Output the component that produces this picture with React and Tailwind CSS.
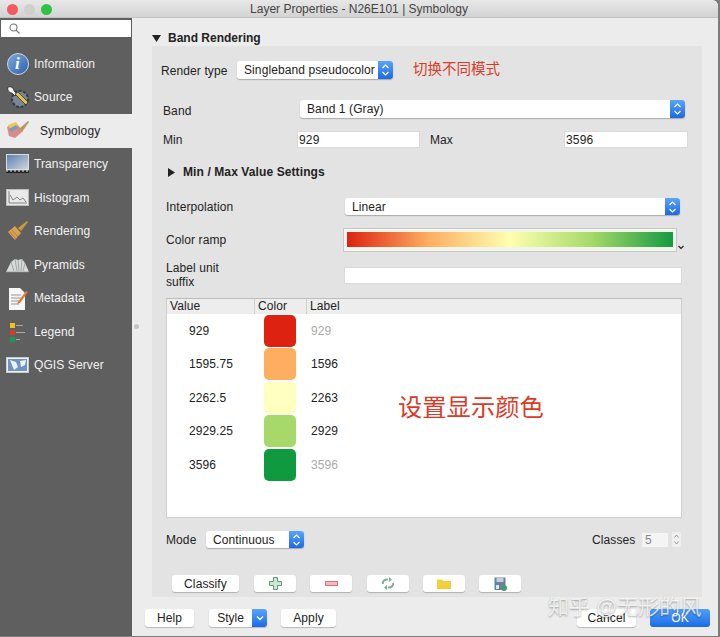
import React from 'react';

const font = { fontFamily: '"Liberation Sans", "Noto Sans CJK SC", sans-serif' };

const Stepper = () => (
  <span className="w-[15px] h-full shrink-0 rounded-r-[3px] bg-gradient-to-b from-[#5aa5f8] to-[#1b69e4] flex items-center justify-center">
    <svg width="9" height="14" viewBox="0 0 9 14" fill="none" stroke="#fff" strokeWidth="1.2">
      <path d="M1.5 5 4.500 2l3 3M1.500 9l3 3 3-3" />
    </svg>
  </span>
);

const Select = ({ children, className, h = 'h-[18px]' }) => (
  <div className={`flex ${h} items-stretch rounded-[3px] bg-white shadow-[0_1px_1px_rgba(0,0,0,0.25)] ${className}`}>
    <span className="flex-1 pl-[7px] text-[12px] leading-[18px] tracking-[0.1px] text-[#222] whitespace-nowrap">{children}</span>
    <Stepper />
  </div>
);

const Input = ({ children, className }) => (
  <div className={`h-[17px] bg-white border border-[#dadada] pl-[1px] text-[12px] leading-[17px] tracking-[0.2px] text-[#222] ${className}`}>{children}</div>
);

const Btn = ({ children, className }) => (
  <div className={`flex h-[17px] items-center justify-center rounded-[3px] bg-white shadow-[0_1px_1px_rgba(0,0,0,0.22)] text-[12px] tracking-[0.1px] text-[#222] ${className}`}>{children}</div>
);

const InfoIcon = () => (
  <span className="flex h-[22px] w-[22px] items-center justify-center rounded-full border border-[#c5d8ef] bg-gradient-to-br from-[#7fa8da] to-[#2f62ad] text-[17px] italic font-bold text-white" style={{ fontFamily: '"Liberation Serif", serif' }}>i</span>
);

const SourceIcon = () => (
  <svg width="24" height="24" viewBox="0 0 24 24">
    <circle cx="14" cy="14" r="8" fill="#7b8794" stroke="#2d3a48" strokeWidth="2" strokeDasharray="3 1.5" />
    <path d="M2 2c3-1 6 1 6 4l3 3-2 2-3-3C3 8 1 5 2 2Z" fill="#f4f4f4" stroke="#222" strokeWidth="0.8" />
    <path d="m9 9 11 11 2-3L12 7Z" fill="#e8c343" stroke="#333" strokeWidth="0.8" />
  </svg>
);

const SymbologyIcon = () => (
  <svg width="24" height="22" viewBox="0 0 24 22">
    <path d="M1 7 10 3l7 8-8 7-6-2Z" fill="#d98a8a" />
    <path d="M2 5 10 2l2 3-8 4Z" fill="#e8cc4a" />
    <path d="M3 9l7-4 2 3-7 4Z" fill="#7f98c0" />
    <path d="m13 9 9-8 1 1-7 10Z" fill="#b49a5c" />
  </svg>
);

const TransparencyIcon = () => (
  <svg width="23" height="20" viewBox="0 0 23 20">
    <defs>
      <linearGradient id="tr" x1="0" x2="1" y1="0" y2="1">
        <stop offset="0" stopColor="#5d7fb0" />
        <stop offset="1" stopColor="#cfd6de" />
      </linearGradient>
    </defs>
    <rect x="0.5" y="0.5" width="22" height="15" fill="url(#tr)" stroke="#ddd" />
    <path d="M0 17h23v2H0Z" fill="#222" />
    <path d="M0 17h23" stroke="#eee" strokeDasharray="2 2" />
  </svg>
);

const HistogramIcon = () => (
  <svg width="23" height="17" viewBox="0 0 23 17">
    <rect x="0.5" y="0.5" width="22" height="16" fill="#e9e9e9" stroke="#bbb" />
    <path d="M3 2v12h18M4 6l3 5 4-3 3 3 3-2 3 4" fill="none" stroke="#777" strokeWidth="0.9" />
  </svg>
);

const RenderingIcon = () => (
  <svg width="22" height="22" viewBox="0 0 22 22">
    <path d="m1 12 7-6 6 7-6 7Z" fill="#d9a04e" />
    <path d="m3 12 6 7M5 10l6 7" stroke="#a8732c" strokeWidth="0.7" />
    <path d="m11 8 9-7 1 1-7 9Z" fill="#c79a3c" />
  </svg>
);

const PyramidsIcon = () => (
  <svg width="23" height="16" viewBox="0 0 23 16">
    <path d="M0 15 5 5l4-3 3 1 4-1 3 4 4 9Z" fill="#d7dad8" />
    <path d="M5 5l3 9M9 2l2 12M12 3l1 11M16 2l-1 12M19 6l-2 8M0 15h23" stroke="#8d908e" strokeWidth="0.7" fill="none" />
  </svg>
);

const MetadataIcon = () => (
  <svg width="20" height="23" viewBox="0 0 20 23">
    <path d="M1 1h11l5 5v17H1Z" fill="#f7f7f7" />
    <path d="M3 8h10M3 11h10M3 14h10M3 17h8" stroke="#888" strokeWidth="0.9" />
    <path d="m10 15 8-11 2 1-8 11-3 1Z" fill="#e6782e" />
  </svg>
);

const LegendIcon = () => (
  <svg width="16" height="20" viewBox="0 0 16 20">
    <rect x="0" y="1" width="5" height="5" fill="#f2c21c" />
    <rect x="0" y="8" width="5" height="5" fill="#e03a22" />
    <rect x="0" y="15" width="5" height="5" fill="#159a5a" />
    <path d="M6 3.500h7M6 10.500h9M6 17.500h4" stroke="#aaa" strokeWidth="1.2" />
  </svg>
);

const ServerIcon = () => (
  <svg width="23" height="16" viewBox="0 0 23 16">
    <rect x="0.5" y="0.5" width="22" height="15" fill="#eef1f4" stroke="#c8ccd0" />
    <rect x="2" y="2" width="19" height="12" fill="#6f94c2" />
    <path d="m4 3 6 2 2 5-4 3-2-5ZM14 4l6-1-1 5-4 2Z" fill="#eef1f4" />
  </svg>
);

const navItems = [
  { label: 'Information', icon: <InfoIcon /> },
  { label: 'Source', icon: <SourceIcon /> },
  { label: 'Symbology', icon: <SymbologyIcon />, active: true },
  { label: 'Transparency', icon: <TransparencyIcon /> },
  { label: 'Histogram', icon: <HistogramIcon /> },
  { label: 'Rendering', icon: <RenderingIcon /> },
  { label: 'Pyramids', icon: <PyramidsIcon /> },
  { label: 'Metadata', icon: <MetadataIcon /> },
  { label: 'Legend', icon: <LegendIcon /> },
  { label: 'QGIS Server', icon: <ServerIcon /> },
];

const classes = [
  { value: '929', color: 'bg-[#dd2211]', label: '929', muted: true },
  { value: '1595.75', color: 'bg-[#fdae61]', label: '1596' },
  { value: '2262.5', color: 'bg-[#ffffc0]', label: '2263' },
  { value: '2929.25', color: 'bg-[#a6d96a]', label: '2929' },
  { value: '3596', color: 'bg-[#0f9a40]', label: '3596', muted: true },
];

const Triangle = ({ open }) => (
  <svg width="9" height="9" viewBox="0 0 9 9" fill="#222">
    {open ? <path d="M0 1h9L4.500 8Z" /> : <path d="M1 0v9l7-4.500Z" />}
  </svg>
);

export default function App() {
  return (
    <div className="h-[637px] w-[720px] overflow-hidden bg-[#7c7c7c]" style={font}>
      <div className="h-[636px] w-[718px] overflow-hidden rounded-tr-[6px] bg-[#ececec] flex flex-col">
        {/* title bar */}
        <div className="relative flex h-[18px] shrink-0 items-center justify-center border-b border-[#c2c2c2] bg-gradient-to-b from-[#e8e8e8] to-[#d3d3d3] pt-[1px] text-[12px] text-[#444]">
          <div className="absolute left-[7px] flex gap-[6px]">
            <span className="h-[11px] w-[11px] rounded-full bg-[#f25b5e]" />
            <span className="h-[11px] w-[11px] rounded-full bg-[#cfcfcf]" />
            <span className="h-[11px] w-[11px] rounded-full bg-[#2cc446]" />
          </div>
          Layer Properties - N26E101 | Symbology
        </div>

        <div className="flex flex-1 min-h-0">
          {/* sidebar */}
          <div className="w-[132px] shrink-0 bg-[#5f5f5f] flex flex-col">
            <div className="mx-[1px] mt-[2px] flex h-[17px] items-center bg-white pl-[8px]">
              <svg width="11" height="11" viewBox="0 0 11 11" fill="none" stroke="#777" strokeWidth="1.1">
                <circle cx="4.500" cy="4.500" r="3.500" />
                <path d="m7 7 3.500 3.500" />
              </svg>
            </div>
            <div className="mt-[10px]">
              {navItems.map((item) => (
                <div
                  key={item.label}
                  className={`flex h-[33.5px] items-center text-[12px] tracking-[0.1px] ${item.active ? 'bg-[#ececec] text-[#222]' : 'text-[#f2f2f2]'}`}
                >
                  <span className="flex w-[34px] shrink-0 items-center justify-center pl-[1px]">{item.icon}</span>
                  <span className={item.active ? 'pl-[6px]' : ''}>{item.label}</span>
                </div>
              ))}
            </div>
          </div>

          {/* splitter */}
          <div className="w-[20px] shrink-0 flex items-start">
            <span className="ml-[2px] mt-[306px] h-[5px] w-[5px] rounded-full bg-[#c4c4c4]" />
          </div>

          {/* main */}
          <div className="w-[550px] shrink-0 flex flex-col">
            <div className="flex h-[28px] items-center gap-[7px] pt-[12px] text-[12px] font-bold text-[#222]">
              <Triangle open />
              Band Rendering
            </div>
            <div className="h-[551px] bg-[#e3e3e3] flex flex-col text-[12px] tracking-[0.1px] text-[#222]">
              <div className="mt-[15px] flex h-[18px] items-center pl-[9px]">
                <span className="w-[76px] pt-[2px]">Render type</span>
                <Select className="w-[156px]">Singleband pseudocolor</Select>
                <span className="ml-[20px] text-[14.500px] tracking-normal text-[#dd3a26]">切换不同模式</span>
              </div>
              <div className="mt-[21px] flex h-[18px] items-center pl-[11px]">
                <span className="w-[137px] pt-[3px]">Band</span>
                <Select className="w-[385px]">Band 1 (Gray)</Select>
              </div>
              <div className="mt-[13px] flex h-[17px] items-center pl-[11px]">
                <span className="w-[134px]">Min</span>
                <Input className="w-[123px]">929</Input>
                <span className="ml-[10px] w-[134px]">Max</span>
                <Input className="w-[124px]">3596</Input>
              </div>
              <div className="mt-[16px] flex h-[16px] items-center gap-[7px] pl-[15px] font-bold">
                <Triangle />
                Min / Max Value Settings
              </div>
              <div className="mt-[18px] flex h-[17px] items-center pl-[14px]">
                <span className="w-[179px]">Interpolation</span>
                <Select className="w-[335px]" h="h-[17px]">Linear</Select>
              </div>
              <div className="mt-[13px] flex h-[24px] pl-[14px]">
                <span className="w-[177px] pt-[3px]">Color ramp</span>
                <div className="h-[24px] w-[334px] border border-[#c8c8c8] bg-[#f1f5ec] p-[3px]">
                  <div className="h-[15px] bg-[linear-gradient(to_right,#dd2211,#fdae61_25%,#ffffb0_50%,#a6d96a_75%,#159a42)]" />
                </div>
                <svg className="mt-[17px] ml-[1px]" width="6" height="5" viewBox="0 0 6 5" fill="none" stroke="#222" strokeWidth="1.2">
                  <path d="m.5 1 2.500 2.500L5.500 1" />
                </svg>
              </div>
              <div className="mt-[10px] flex h-[26px] items-center pl-[14px]">
                <span className="w-[178px] leading-[14px]">Label unit<br />suffix</span>
                <Input className="w-[338px]" />
              </div>

              {/* classes table */}
              <div className="relative mt-[10px] ml-[14px] h-[220px] w-[516px] border border-[#cfcfcf] border-t-[#bdbdbd] bg-white flex flex-col">
                <div className="flex h-[15px] shrink-0 items-center bg-[#ededed] leading-[15px]">
                  <span className="w-[88px] border-r border-[#d0d0d0] pl-[3px]">Value</span>
                  <span className="w-[52px] border-r border-[#d0d0d0] pl-[3px]">Color</span>
                  <span className="pl-[3px]">Label</span>
                </div>
                <div>
                  {classes.map((row) => (
                    <div key={row.value} className="flex h-[33.5px] items-center">
                      <span className="w-[97px] pl-[22px]">{row.value}</span>
                      <span className={`h-[32px] w-[32px] rounded-[5px] ${row.color}`} />
                      <span className={`pl-[15px] ${row.muted ? 'text-[#aaa]' : ''}`}>{row.label}</span>
                    </div>
                  ))}
                </div>
                <span className="absolute left-[231px] top-[94px] text-[24.300px] leading-[30px] tracking-normal text-[#dd3a26]">设置显示颜色</span>
              </div>

              <div className="mt-[13px] flex h-[17px] items-center pl-[14px]">
                <span className="w-[40px]">Mode</span>
                <Select className="w-[98px]" h="h-[17px]">Continuous</Select>
                <span className="ml-[288px] w-[50px]">Classes</span>
                <div className="h-[14px] w-[26px] bg-[#f4f4f4] pl-[3px] text-[12px] leading-[14px] text-[#888]">5</div>
                <svg className="ml-[4px]" width="9" height="15" viewBox="0 0 9 15" fill="none" stroke="#999" strokeWidth="1">
                  <rect x="0" y="0" width="9" height="15" rx="2" fill="#efefef" stroke="none" />
                  <path d="M2.500 5.500 4.500 3l2 2.500M2.500 9.500l2 2.500 2-2.500" />
                </svg>
              </div>

              <div className="mt-[27px] flex h-[17px] pl-[20px]">
                <Btn className="w-[67px]">Classify</Btn>
                <Btn className="ml-[15px] w-[42px]">
                  <svg width="13" height="13" viewBox="0 0 13 13">
                    <path d="M4.500.5h4v4h4v4h-4v4h-4v-4h-4v-4h4Z" fill="#cfe6d5" stroke="#5f9a78" />
                  </svg>
                </Btn>
                <Btn className="ml-[14px] w-[42px]">
                  <svg width="13" height="5" viewBox="0 0 13 5">
                    <rect x="0.500" y="0.500" width="12" height="4" fill="#f4b9c2" stroke="#e0707f" />
                  </svg>
                </Btn>
                <Btn className="ml-[15px] w-[42px]">
                  <svg width="14" height="13" viewBox="0 0 14 13" fill="none" stroke="#7fae98" strokeWidth="2">
                    <path d="M2 7c-1-3 2-5 5-4.500M12 6c1 3-2 5-5 4.500" />
                    <path d="m8 0 3 2.500-3 2.500ZM6 8l-3 2.500L6 13Z" fill="#7fae98" stroke="none" />
                  </svg>
                </Btn>
                <Btn className="ml-[14px] w-[42px]">
                  <svg width="14" height="11" viewBox="0 0 14 11">
                    <path d="M0 1.500h5l1 1.500h8v8H0Z" fill="#f5cf3a" />
                  </svg>
                </Btn>
                <Btn className="ml-[14px] w-[42px]">
                  <svg width="13" height="14" viewBox="0 0 13 14">
                    <rect x="0.500" y="0.500" width="11" height="12.500" rx="1" fill="#66809f" />
                    <rect x="2.500" y="1" width="7" height="4" fill="#c6d0db" />
                    <rect x="2" y="8" width="3" height="4" fill="#dfe5eb" />
                    <circle cx="10" cy="11" r="3" fill="#4a9a6a" />
                  </svg>
                </Btn>
              </div>
            </div>
          </div>
        </div>

        {/* dialog buttons, over the bottom of the sidebar */}
        <div className="relative h-0">
          <div className="absolute bottom-[9px] left-[145px] flex h-[18px] w-[565px] text-[12px]">
            <Btn className="h-[18px] w-[49px]">Help</Btn>
            <div className="ml-[15px] flex h-[18px] w-[58px] rounded-[3px] bg-white shadow-[0_1px_1px_rgba(0,0,0,0.22)]">
              <span className="flex-1 text-center leading-[18px] text-[#222]">Style</span>
              <span className="flex w-[15px] items-center justify-center rounded-r-[3px] bg-gradient-to-b from-[#5aa5f8] to-[#1b69e4]">
                <svg width="8" height="6" viewBox="0 0 8 6" fill="none" stroke="#fff" strokeWidth="1.300">
                  <path d="m1 1.500 3 3 3-3" />
                </svg>
              </span>
            </div>
            <Btn className="ml-[14px] h-[18px] w-[55px]">Apply</Btn>
            <Btn className="ml-[241px] h-[18px] w-[59px]">Cancel</Btn>
            <div className="ml-[14px] flex h-[18px] w-[60px] items-center justify-center rounded-[3px] bg-gradient-to-b from-[#4f9ff8] to-[#1b6ce6] text-white">OK</div>
          </div>
          {/* watermark */}
          <span className="absolute bottom-[17px] left-[548px] whitespace-nowrap text-[21px] leading-[24px] text-white/75 [text-shadow:0_1px_2px_rgba(0,0,0,0.35)]">知乎 @无形的风</span>
        </div>
      </div>
    </div>
  );
}
